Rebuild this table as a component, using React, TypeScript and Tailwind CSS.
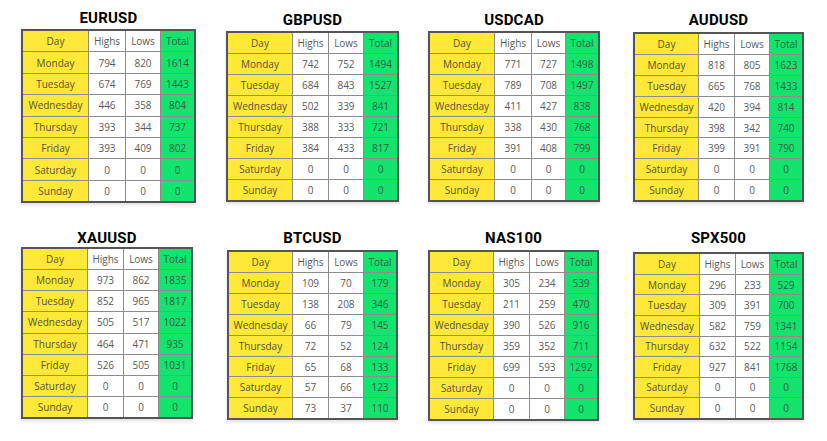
import React from "react";

type T = {
  name: string;
  rows: [string, string, string, string][];
  wrap: string;
  gap: string;
  cols: string;
  rowH: string;
};

const days = ["Monday", "Tuesday", "Wednesday", "Thursday", "Friday", "Saturday", "Sunday"];

function mk(vals: [number, number, number][]): [string, string, string, string][] {
  return vals.map((v, i) => [days[i], String(v[0]), String(v[1]), String(v[2])]);
}

const top: T[] = [
  {
    name: "EURUSD",
    rows: mk([[794, 820, 1614], [674, 769, 1443], [446, 358, 804], [393, 344, 737], [393, 409, 802], [0, 0, 0], [0, 0, 0]]),
    wrap: "ml-[21px] mt-[11px]",
    gap: "mb-[3px]",
    cols: "grid-cols-[65px_36px_34px_33px]",
    rowH: "auto-rows-[20.4px]",
  },
  {
    name: "GBPUSD",
    rows: mk([[742, 752, 1494], [684, 843, 1527], [502, 339, 841], [388, 333, 721], [384, 433, 817], [0, 0, 0], [0, 0, 0]]),
    wrap: "ml-[30px] mt-[13px]",
    gap: "mb-[3px]",
    cols: "grid-cols-[64px_35px_34px_33px]",
    rowH: "auto-rows-[20px]",
  },
  {
    name: "USDCAD",
    rows: mk([[771, 727, 1498], [789, 708, 1497], [411, 427, 838], [338, 430, 768], [391, 408, 799], [0, 0, 0], [0, 0, 0]]),
    wrap: "ml-[29px] mt-[13px]",
    gap: "mb-[3px]",
    cols: "grid-cols-[64px_36px_33px_32px]",
    rowH: "auto-rows-[20px]",
  },
  {
    name: "AUDUSD",
    rows: mk([[818, 805, 1623], [665, 768, 1433], [420, 394, 814], [398, 342, 740], [399, 391, 790], [0, 0, 0], [0, 0, 0]]),
    wrap: "ml-[33px] mt-[13px]",
    gap: "mb-[4px]",
    cols: "grid-cols-[63px_35px_34px_32px]",
    rowH: "auto-rows-[19.9px]",
  },
];

const bottom: T[] = [
  {
    name: "XAUUSD",
    rows: mk([[973, 862, 1835], [852, 965, 1817], [505, 517, 1022], [464, 471, 935], [526, 505, 1031], [0, 0, 0], [0, 0, 0]]),
    wrap: "ml-[21px]",
    gap: "mb-[1px]",
    cols: "grid-cols-[64px_35px_34px_32px]",
    rowH: "auto-rows-[20.1px]",
  },
  {
    name: "BTCUSD",
    rows: mk([[109, 70, 179], [138, 208, 346], [66, 79, 145], [72, 52, 124], [65, 68, 133], [57, 66, 123], [73, 37, 110]]),
    wrap: "ml-[34px]",
    gap: "mb-[4px]",
    cols: "grid-cols-[63px_35px_34px_32px]",
    rowH: "auto-rows-[19.9px]",
  },
  {
    name: "NAS100",
    rows: mk([[305, 234, 539], [211, 259, 470], [390, 526, 916], [359, 352, 711], [699, 593, 1292], [0, 0, 0], [0, 0, 0]]),
    wrap: "ml-[30px]",
    gap: "mb-[4px]",
    cols: "grid-cols-[63px_35px_34px_32px]",
    rowH: "auto-rows-[20px]",
  },
  {
    name: "SPX500",
    rows: mk([[296, 233, 529], [309, 391, 700], [582, 759, 1341], [632, 522, 1154], [927, 841, 1768], [0, 0, 0], [0, 0, 0]]),
    wrap: "ml-[34px]",
    gap: "mb-[6px]",
    cols: "grid-cols-[64px_35px_33px_32px]",
    rowH: "auto-rows-[19.6px]",
  },
];

const cellBase = "flex items-center justify-center text-[10px] leading-none";

function Table({ t }: { t: T }) {
  const header: [string, string, string, string] = ["Day", "Highs", "Lows", "Total"];
  const all = [header, ...t.rows];
  return (
    <div className={`flex flex-col items-center ${t.wrap}`}>
      <div
        className={`text-[15px] leading-[15px] font-bold text-black tracking-[0.2px] ${t.gap}`}
        style={{ fontFamily: "Roboto, 'Liberation Sans', sans-serif" }}
      >
        {t.name}
      </div>
      <div
        className={`grid ${t.cols} ${t.rowH} gap-px bg-[#8c8c8c] border-2 border-[#555] shadow-[0_2px_3px_rgba(0,0,0,0.12)]`}
        style={{ fontFamily: "'Open Sans', sans-serif" }}
      >
        {all.map((r, i) => (
          <React.Fragment key={i}>
            <div className={`${cellBase} bg-[#ffe838] text-[#57532f]`}>{r[0]}</div>
            <div className={`${cellBase} bg-white text-[#5a5a5a]`}>{r[1]}</div>
            <div className={`${cellBase} bg-white text-[#5a5a5a]`}>{r[2]}</div>
            <div className={`${cellBase} bg-[#14e36e] text-[#2f5e40]`}>{r[3]}</div>
          </React.Fragment>
        ))}
      </div>
    </div>
  );
}

export default function App() {
  return (
    <div className="w-[827px] h-[441px] bg-white overflow-hidden flex flex-col">
      <div className="flex items-start">
        {top.map((t) => (
          <Table key={t.name} t={t} />
        ))}
      </div>
      <div className="flex items-start mt-[28px]">
        {bottom.map((t) => (
          <Table key={t.name} t={t} />
        ))}
      </div>
    </div>
  );
}
